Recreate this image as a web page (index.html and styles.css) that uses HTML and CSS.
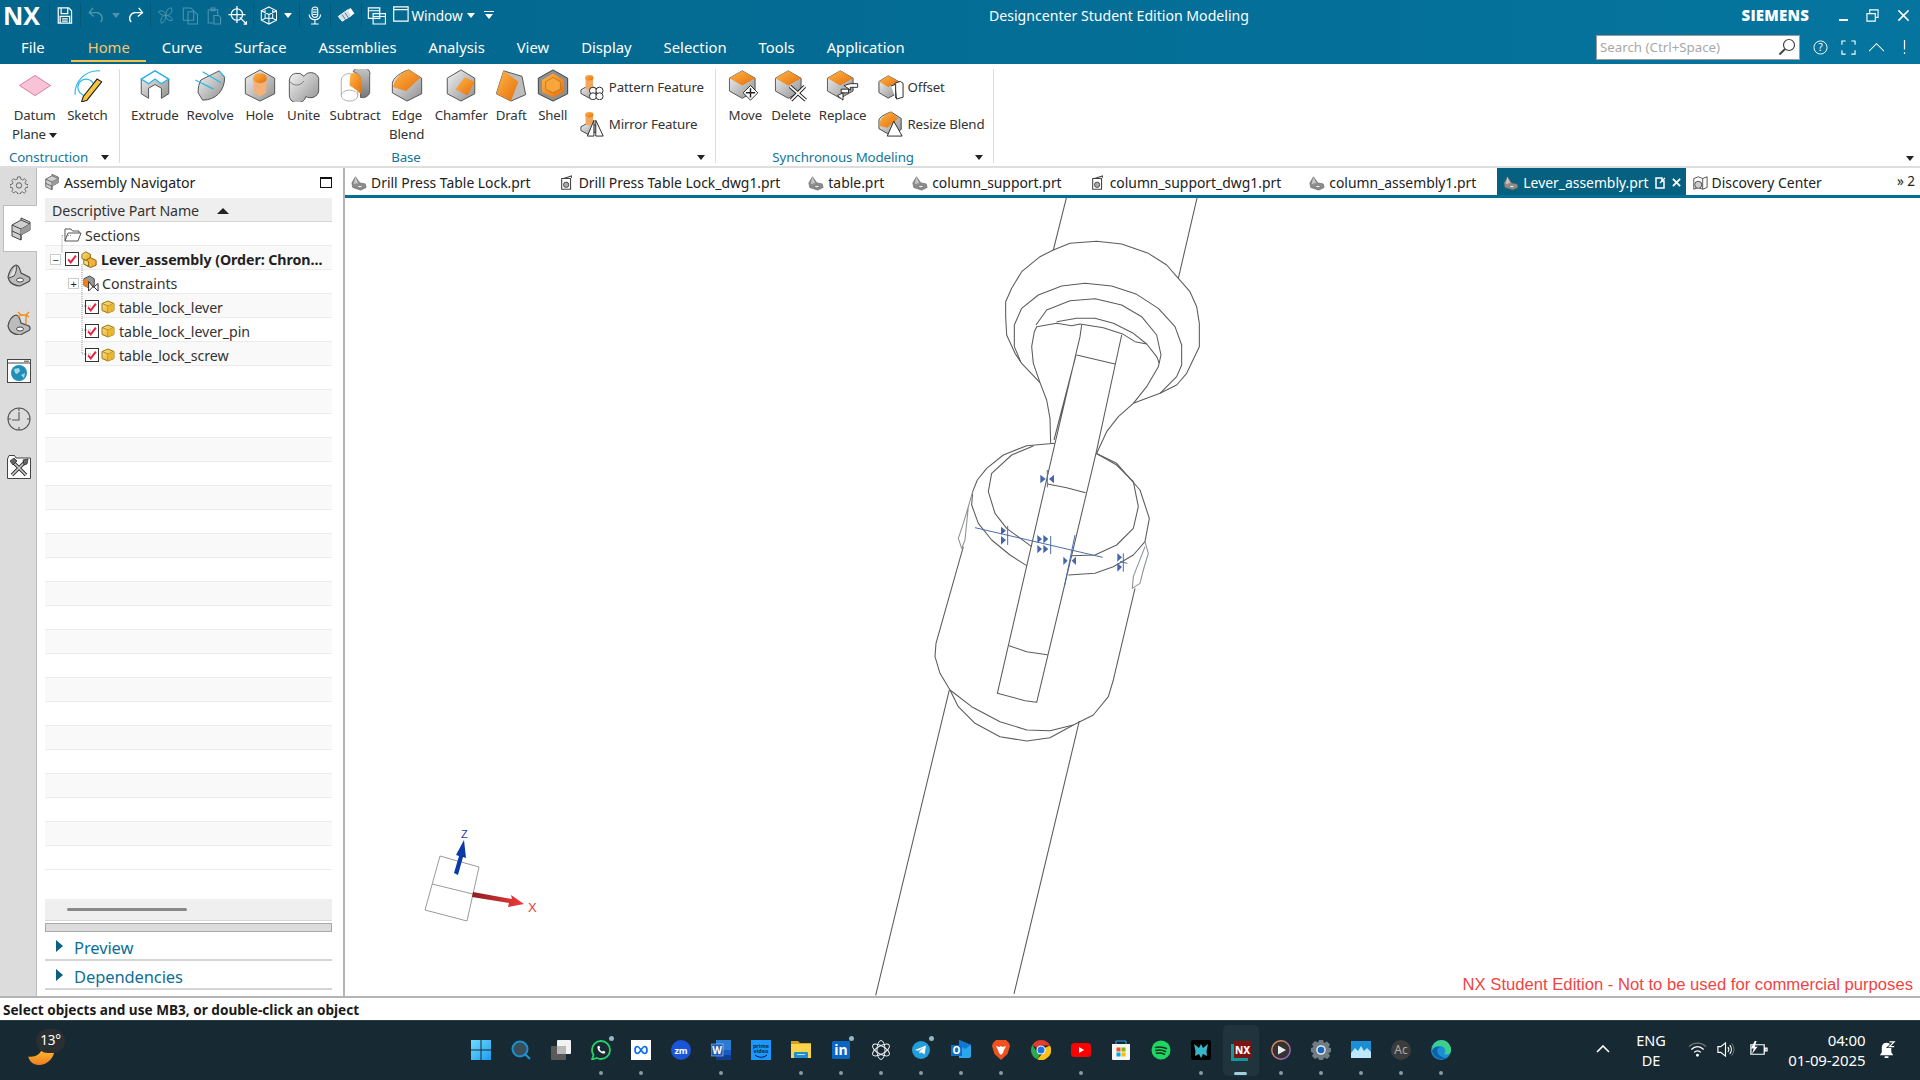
FILE: index.html
```html
<!DOCTYPE html>
<html lang="en">
<head>
<meta charset="UTF-8" />
<title>Designcenter Student Edition Modeling</title>
<link rel="stylesheet" href="styles.css">
</head>
<body>

<!-- shared icons -->
<svg class="defs" xmlns="http://www.w3.org/2000/svg">
  <defs>
    <linearGradient id="grey" x1="0" y1="0" x2="1" y2="1"><stop offset="0" stop-color="#f4f4f4"/><stop offset="1" stop-color="#8f8f8f"/></linearGradient>
    <linearGradient id="greyd" x1="0" y1="0" x2="0" y2="1"><stop offset="0" stop-color="#c9c9c9"/><stop offset="1" stop-color="#777"/></linearGradient>
    <linearGradient id="org" x1="0" y1="0" x2="1" y2="1"><stop offset="0" stop-color="#ffb54a"/><stop offset="1" stop-color="#e56f08"/></linearGradient>
    <linearGradient id="yel" x1="0" y1="0" x2="1" y2="1"><stop offset="0" stop-color="#ffe58a"/><stop offset="1" stop-color="#d9a21c"/></linearGradient>
    <linearGradient id="win" x1="0" y1="0" x2="1" y2="1"><stop offset="0" stop-color="#6fdcff"/><stop offset="1" stop-color="#1d9bf0"/></linearGradient>
    <linearGradient id="ring" x1="0" y1="0" x2="1" y2="1"><stop offset="0" stop-color="#f59a3c"/><stop offset="1" stop-color="#8a5ad0"/></linearGradient>
    <linearGradient id="redarrow" x1="0" y1="0" x2="1" y2="0"><stop offset="0" stop-color="#8e1e22"/><stop offset="1" stop-color="#f03a3a"/></linearGradient>
    <linearGradient id="moon" x1="0" y1="0" x2="0" y2="1"><stop offset="0" stop-color="#ffc23a"/><stop offset="1" stop-color="#ee7d1c"/></linearGradient>
  </defs>

  <!-- ribbon -->
  <symbol id="r-datum" viewBox="0 0 36 36"><path d="M1 18 18 7 35 18 18 29Z" fill="#f8c3d6" stroke="#df6f9c"/></symbol>
  <symbol id="r-sketch" viewBox="0 0 36 36"><path d="M5 28A25 25 0 0 1 32 2" fill="none" stroke="#29b6e6" stroke-width="1.2"/><circle cx="17" cy="20" r="9" fill="none" stroke="#29b6e6" stroke-width="1.2"/><path d="M29 11 34 14 18 34 12 36 14 30Z" fill="#f7c63c" stroke="#222" stroke-width="1.2"/></symbol>
  <symbol id="r-extrude" viewBox="0 0 36 36"><path d="M3 11 18 2 33 11V27L25 32V21L18 17 11 21V32L3 27Z" fill="url(#grey)" stroke="#4a4a4a"/><path d="M3 11 18 2 33 11 25 16 18 11 11 16Z" fill="#fff" stroke="#2cb5e6" stroke-width="1.4"/></symbol>
  <symbol id="r-revolve" viewBox="0 0 36 36"><path d="M8 12 28 2 34 9C34 24 24 34 10 34L5 26C5 20 6 16 8 12Z" fill="url(#grey)" stroke="#4a4a4a"/><path d="M2 12 22 22M10 3 30 15M28 2 34 9" fill="none" stroke="#2cb5e6" stroke-width="1.4"/></symbol>
  <symbol id="r-hole" viewBox="0 0 36 36"><path d="M18 1 34 10V27L18 35 2 27V10Z" fill="url(#grey)" stroke="#4a4a4a"/><path d="M11 10V26L18 30 25 26V10Z" fill="#f2b178"/><ellipse cx="18" cy="10" rx="7.5" ry="5.5" fill="url(#org)"/></symbol>
  <symbol id="r-unite" viewBox="0 0 36 36"><path d="M2 12A9 9 0 0 1 18 8 9 9 0 0 1 34 10V24A9 8 0 0 1 20 30 9 8 0 0 1 2 28Z" fill="url(#grey)" stroke="#4a4a4a"/><path d="M2 13C6 19 14 19 18 13" fill="none" stroke="#777"/></symbol>
  <symbol id="r-subtract" viewBox="0 0 36 36"><path d="M16 3A9 7 0 0 1 34 7V26A8 7 0 0 1 24 31V12C24 7 20 4 16 3Z" fill="url(#greyd)" stroke="#555"/><path d="M13 5C18 3 24 6 25 12V28C21 24 16 20 12 18Z" fill="url(#org)"/><ellipse cx="12" cy="29" rx="9" ry="6" fill="none" stroke="#aaa"/><path d="M3 29V12A9 8 0 0 1 13 5M21 29V23" fill="none" stroke="#aaa"/></symbol>
  <symbol id="r-blend" viewBox="0 0 36 36"><path d="M20 1 34 10V27L18 35 2 26V16C2 10 12 3 20 1Z" fill="url(#grey)" stroke="#4a4a4a"/><path d="M20 1 33 9 17 24 3 20C3 12 12 3 20 1Z" fill="url(#org)"/></symbol>
  <symbol id="r-chamfer" viewBox="0 0 36 36"><path d="M18 1 33 10V27L18 35 3 27V10Z" fill="url(#grey)" stroke="#4a4a4a"/><path d="M22 9 33 14 25 29 12 22Z" fill="url(#org)"/></symbol>
  <symbol id="r-draft" viewBox="0 0 36 36"><path d="M10 2 30 8 34 28 18 35 2 27Z" fill="#bdbdbd" stroke="#4a4a4a"/><path d="M10 2 18 35 2 27Z M10 2 26 14 18 35Z" fill="url(#org)"/></symbol>
  <symbol id="r-shell" viewBox="0 0 36 36"><path d="M18 1 34 10V27L18 35 2 27V10Z" fill="#8f8f8f" stroke="#333"/><path d="M18 5 30 12V25L18 31 6 25V12Z" fill="url(#org)"/><path d="M10 14 18 9 26 14V22L18 26 10 22Z" fill="#f7a63a" stroke="#a65b08" stroke-width=".6"/></symbol>
  <symbol id="r-pattern" viewBox="0 0 28 28"><path d="M1 17 10 12 20 17V21L10 26 1 21Z" fill="url(#grey)" stroke="#444"/><path d="M6 4V16L10 18 14 16V4Z" fill="#f0a860"/><ellipse cx="10" cy="4" rx="4.5" ry="3" fill="url(#org)"/><g fill="#fff" stroke="#222"><circle cx="14" cy="18" r="3.8"/><circle cx="21" cy="18" r="3.8"/><circle cx="14" cy="24" r="3.8"/><circle cx="21" cy="24" r="3.8"/></g></symbol>
  <symbol id="r-mirror" viewBox="0 0 28 28"><path d="M1 17 10 12 20 17V21L10 26 1 21Z" fill="url(#grey)" stroke="#444"/><path d="M6 4V14L10 16 14 14V4Z" fill="#f0a860"/><ellipse cx="10" cy="4" rx="4.5" ry="3" fill="url(#org)"/><path d="M15 10 8 27H15ZM17 10 25 27H17Z" fill="#fff" stroke="#222"/></symbol>
  <symbol id="r-cube" viewBox="0 0 36 36"><path d="M15 2 29 10V24L15 32 1 24V10Z" fill="url(#grey)" stroke="#4a4a4a"/><path d="M15 2 29 10 15 18 1 10Z" fill="url(#org)"/></symbol>
  <symbol id="r-offset" viewBox="0 0 28 28"><path d="M11 2 22 8V20L11 26 1 20V8Z" fill="url(#grey)" stroke="#444"/><path d="M11 2 22 8 11 14 1 8Z" fill="url(#org)"/><path d="M18 10 24 8 27 10V25L20 27Z" fill="#fff" stroke="#222"/><path d="M14 13 19 11V26" fill="#fff" stroke="#222"/></symbol>
  <symbol id="r-resize" viewBox="0 0 28 28"><path d="M14 1 25 8V20L13 26 1 19V10C1 7 8 3 14 1Z" fill="url(#grey)" stroke="#444"/><path d="M14 1 22 8 10 18 1 16C1 9 8 3 14 1Z" fill="url(#org)"/><path d="M17 11 26 27H10Z" fill="#fff" stroke="#222"/></symbol>

  <!-- file tabs -->
  <symbol id="f-part" viewBox="0 0 18 18"><path d="M5 2 10 9 16 10 17 14 11 17 2 14 1 9Z" fill="#8e8e8e" stroke="#5a5a5a" stroke-width=".7"/><path d="M5 2 8 9 3 10Z" fill="#c8c8c8"/><ellipse cx="10" cy="13" rx="2.6" ry="1.4" fill="#eee" stroke="#555" stroke-width=".7"/></symbol>
  <symbol id="f-dwg" viewBox="0 0 18 18"><path d="M3 4H13V16H3Z" fill="#fff" stroke="#444" stroke-width="1.2"/><path d="M5 4 14 1V3" fill="none" stroke="#444" stroke-width="1.2"/><circle cx="8" cy="11" r="3" fill="#aaa" stroke="#444"/></symbol>
  <symbol id="f-disc" viewBox="0 0 18 18"><path d="M2 4 7 2 12 4 17 2V14L12 16 7 14 2 16Z" fill="#fff" stroke="#444"/><path d="M12 4V16" stroke="#444"/><circle cx="7" cy="11" r="4" fill="#ccc" stroke="#444"/></symbol>

  <!-- quick access -->
  <symbol id="q-save" viewBox="0 0 20 20"><path d="M3 2H14L17 5V18H3ZM6 2V8H13V2M5 11H15V18H5ZM7 13.5H13M7 16H13" fill="none" stroke="currentColor" stroke-width="1.3"/></symbol>
  <symbol id="q-undo" viewBox="0 0 20 20"><path d="M7 2 3 7 8 11M3 7H11A6 6 0 0 1 15 17" fill="none" stroke="currentColor" stroke-width="1.4"/></symbol>
  <symbol id="q-redo" viewBox="0 0 20 20"><path d="M13 2 17 7 12 11M17 7H9A6 6 0 0 0 5 17" fill="none" stroke="currentColor" stroke-width="1.4"/></symbol>
  <symbol id="q-cut" viewBox="0 0 20 20"><path d="M10 10C10 5 12 2 16 2 17 6 15 10 10 10ZM10 10C6 10 3 8 2 6 6 4 10 6 10 10ZM10 10C14 10 17 13 17 15 13 16 10 14 10 10ZM10 10C10 14 8 18 5 18 4 14 6 10 10 10Z" fill="none" stroke="currentColor"/></symbol>
  <symbol id="q-copy" viewBox="0 0 20 20"><path d="M3 2H11L14 5V15H3ZM8 6H15L18 9V19H8Z" fill="none" stroke="currentColor" stroke-width="1.1"/></symbol>
  <symbol id="q-paste" viewBox="0 0 20 20"><path d="M4 4H14V9M4 4V18H9M7 2H11V5H7ZM10 10H15L17 12V19H10Z" fill="none" stroke="currentColor" stroke-width="1.1"/></symbol>
  <symbol id="q-cross" viewBox="0 0 20 20"><circle cx="9" cy="9" r="6" fill="none" stroke="currentColor" stroke-width="1.3"/><path d="M9 0V18M0 9H18M12 12 19 19M16 19H19V16" fill="none" stroke="currentColor" stroke-width="1.3"/></symbol>
  <symbol id="q-wire" viewBox="0 0 20 20"><path d="M10 1 18 5V15L10 19 2 15V5ZM2 5 10 9 18 5M10 9V19M6 3V13L2 15M14 3V13L18 15M6 13H14" fill="none" stroke="currentColor" stroke-width="1.1"/></symbol>
  <symbol id="q-mic" viewBox="0 0 20 20"><rect x="7" y="1" width="6" height="11" rx="3" fill="none" stroke="currentColor" stroke-width="1.2"/><path d="M8 4H12M8 6.5H12M8 9H12M4 9A6 5.5 0 0 0 16 9M10 15V19M6 19H14" fill="none" stroke="currentColor" stroke-width="1.2"/></symbol>
  <symbol id="q-paint" viewBox="0 0 20 20"><path d="M2 11 12 4 16 10 6 16Z" fill="#cfe2ea" stroke="#fff"/><path d="M12 4 15 2 19 8 16 10" fill="#fff"/><path d="M6 9 10 15M9 7 13 13" stroke="#557" stroke-width=".8"/></symbol>
  <symbol id="q-wins" viewBox="0 0 20 20"><path d="M1 2H13V13H1ZM1 5H13M6 8H19V19H6ZM6 11H19" fill="#05709a" stroke="currentColor" stroke-width="1.2"/></symbol>
  <symbol id="q-win" viewBox="0 0 20 20"><path d="M1 1H19V19H1ZM1 4.5H19" fill="none" stroke="currentColor" stroke-width="1.5"/></symbol>

  <!-- left rail -->
  <symbol id="n-gear" viewBox="0 0 20 20"><path d="M8.5 1H11.5L12 3.5 14 4.4 16.2 3 18.2 5.3 16.7 7.3 17.3 9 20 9.5V12.5L17.4 13 16.6 15 18 17 15.8 19 13.8 17.6 12 18.3 11.5 20H8.5L8 18.2 6 17.4 4 18.9 1.9 16.8 3.2 14.8 2.5 13 0 12.5V9.5L2.5 9 3.3 7.1 1.9 5.1 4 3 6 4.3 8 3.5Z" fill="none" stroke="#555" stroke-width=".9"/><circle cx="10" cy="10.5" r="3" fill="none" stroke="#555"/></symbol>
  <symbol id="n-asm" viewBox="0 0 20 24"><path d="M1 8 10 3V1L19 5V13L10 18V23L1 19Z" fill="#cfcfcf" stroke="#444"/><path d="M1 8 10 12V23M10 3 19 7M10 12 19 7M1 14 10 18" fill="none" stroke="#444"/><path d="M10 12 19 7V13L10 18Z" fill="#9a9a9a"/></symbol>
  <symbol id="n-part" viewBox="0 0 24 22"><path d="M9 1C12 1 13 5 14 9L22 13C24 15 23 17 21 18L13 22C8 22 3 19 2 16L1 13C2 8 5 2 9 1Z" fill="#bcbcbc" stroke="#4a4a4a" stroke-width="1.2"/><path d="M9 1C10 5 9 9 7 12L2 14" fill="#e2e2e2" stroke="#4a4a4a"/><ellipse cx="13" cy="16" rx="3.5" ry="2" fill="#fff" stroke="#444"/></symbol>
  <symbol id="n-part2" viewBox="0 0 24 24"><path d="M9 4C12 4 13 8 14 12L22 15C24 17 23 19 21 20L13 24C8 24 3 21 2 18L1 15C2 10 5 5 9 4Z" fill="#bcbcbc" stroke="#4a4a4a" stroke-width="1.2"/><ellipse cx="13" cy="18" rx="3.5" ry="2" fill="#fff" stroke="#444"/><path d="M11 1 14 4 11 6M14 4H19M22 1 19 4 22 6M19 4V13" fill="none" stroke="#ef8a1b" stroke-width="1.3"/></symbol>
  <symbol id="n-web" viewBox="0 0 24 24"><rect x=".5" y=".5" width="23" height="23" fill="#fff" stroke="#444"/><path d="M1 4H23M17 2.2H22" stroke="#444"/><circle cx="12" cy="14" r="8" fill="#1f8fb8"/><path d="M7 10 12 9 13 12 10 15 8 14ZM14 16 18 14 17 19Z" fill="#a5d7e6"/></symbol>
  <symbol id="n-clock" viewBox="0 0 24 24"><circle cx="12" cy="12" r="11" fill="none" stroke="#555" stroke-width="1.1"/><path d="M12 1V4M12 20V23M1 12H4M20 12H23M12 5V13H5" fill="none" stroke="#555" stroke-width="1.1"/></symbol>
  <symbol id="n-tools" viewBox="0 0 24 24"><path d="M.5 4V23.5H23.5V3H9L7.5 .5H2Z" fill="#fff" stroke="#444"/><path d="M5 20 18 7M6 7 19 20" stroke="#333" stroke-width="3.6"/><path d="M5 20 18 7M6 7 19 20" stroke="#c9c9c9" stroke-width="1.6"/><path d="M16 5 21 4 20 9 17 10ZM3 6 7 3 10 6 6 10Z" fill="#666" stroke="#222" stroke-width=".7"/></symbol>

  <!-- tree -->
  <symbol id="t-folder" viewBox="0 0 18 14"><path d="M1 13V1H7L8.5 3H15V5M1 13 4 5H17L14 13Z" fill="#fff" stroke="#555"/></symbol>
  <symbol id="t-asm" viewBox="0 0 18 18"><path d="M5 1 10 3.5V8L5 10.5 1 8V3.5Z" fill="url(#yel)" stroke="#8a6a14"/><path d="M10 7 16 10V15L10 17.5 5 15V10Z" fill="#f1b13a" stroke="#8a5a10"/><path d="M3 9 8 11V16L3 14Z" fill="#f7dc7c" stroke="#8a6a14"/></symbol>
  <symbol id="t-con" viewBox="0 0 18 18"><path d="M2 4 8 1 13 4V11L8 14 2 11Z" fill="#999" stroke="#444"/><path d="M2 4 8 7V14L2 11Z" fill="#ef7f1a"/><path d="M7 7V17L12 12 17 17V9L12 13Z" fill="#fff" stroke="#222"/></symbol>
  <symbol id="t-cube" viewBox="0 0 14 14"><path d="M7 1 13 3.5V10.5L7 13 1 10.5V3.5Z" fill="url(#yel)" stroke="#9a7a18"/><path d="M1 3.5 7 6 13 3.5M7 6V13" fill="none" stroke="#9a7a18" stroke-width=".8"/><path d="M7 6 13 3.5V10.5L7 13Z" fill="#eab52e"/></symbol>
  <symbol id="t-check" viewBox="0 0 14 14"><path d="M2.5 7.5 5.5 11 11.5 3" fill="none" stroke="#ee1f3c" stroke-width="2.3"/></symbol>

  <!-- taskbar -->
  <symbol id="b-start" viewBox="0 0 20 20"><path d="M0 0H9.5V9.5H0ZM10.5 0H20V9.5H10.5ZM0 10.5H9.5V20H0ZM10.5 10.5H20V20H10.5Z" fill="url(#win)"/></symbol>
  <symbol id="b-search" viewBox="0 0 20 20"><circle cx="9" cy="9" r="7.5" fill="#3b4d56" stroke="#1c8fd2" stroke-width="2"/><path d="M14 14 19 19" stroke="#1c8fd2" stroke-width="2.2"/></symbol>
  <symbol id="b-view" viewBox="0 0 20 20"><rect y="6" width="15" height="14" rx="1" fill="#5a5a5a"/><rect x="6" width="14" height="14" rx="1" fill="#f2f2f2"/><rect x="6" y="6" width="9" height="8" fill="#b9b9b9"/></symbol>
  <symbol id="b-wa" viewBox="0 0 20 20"><path d="M10 1A9 9 0 0 1 10 19C8.5 19 7 18.6 5.8 18L1 19.5 2.5 15C1.5 13.6 1 11.8 1 10A9 9 0 0 1 10 1Z" fill="none" stroke="#25d366" stroke-width="1.8"/><path d="M6.8 6C6 7.5 6.5 9.5 8.3 11.5 10.2 13.3 12.5 14 14 13.2L14.3 11.8 12.3 10.7 11.3 11.6C10 11 9 10 8.4 8.7L9.2 7.7 8.2 5.8Z" fill="#fff"/></symbol>
  <symbol id="b-meta" viewBox="0 0 20 20"><rect width="20" height="20" fill="#fff"/><path d="M4 10C4 8 5 6.5 6.5 6.5 8.5 6.5 11.5 13.5 13.5 13.5 15 13.5 16 12 16 10 16 8 15 6.5 13.5 6.5 11.5 6.5 8.5 13.5 6.5 13.5 5 13.5 4 12 4 10Z" fill="none" stroke="#0a6cf0" stroke-width="1.7"/></symbol>
  <symbol id="b-zm" viewBox="0 0 20 20"><circle cx="10" cy="10" r="10" fill="#1a55d8"/></symbol>
  <symbol id="b-word" viewBox="0 0 20 20"><path d="M5 0H20V5H5ZM5 5H20V10H5Z" fill="#2b7cd3"/><path d="M5 10H20V15H5Z" fill="#185abd"/><path d="M5 15H20V20H5Z" fill="#103f91"/><rect y="4" width="12" height="12" fill="#1a5dbb" stroke="#fff" stroke-width=".4"/></symbol>
  <symbol id="b-prime" viewBox="0 0 20 20"><rect width="20" height="20" fill="#1a98ff"/><path d="M4 15C8 18 12 18 16 15" fill="none" stroke="#113" stroke-width="1"/></symbol>
  <symbol id="b-files" viewBox="0 0 20 20"><path d="M0 1H7L9 3H20V18H0Z" fill="#d9a01f"/><path d="M0 4H20V18H0Z" fill="#fbd34d"/><rect x="3" y="12" width="14" height="6" rx="1" fill="#1d8ecf"/><rect x="6" y="14" width="8" height="1" fill="#bfe3f5"/></symbol>
  <symbol id="b-in" viewBox="0 0 20 20"><rect width="18" height="18" x="1" y="1" rx="1.5" fill="#0a66c2"/></symbol>
  <symbol id="b-gpt" viewBox="0 0 20 20"><g fill="none" stroke="#eee" stroke-width="1"><ellipse cx="10" cy="10" rx="4" ry="9.5"/><ellipse cx="10" cy="10" rx="4" ry="9.5" transform="rotate(60 10 10)"/><ellipse cx="10" cy="10" rx="4" ry="9.5" transform="rotate(120 10 10)"/></g></symbol>
  <symbol id="b-tg" viewBox="0 0 20 20"><circle cx="10" cy="10" r="9" fill="#229ed9"/><path d="M4 10 15 5.5 13.5 14.5 10.3 12.2 8.7 13.8 8.3 11.2 13 7.2 7.2 10.8Z" fill="#fff"/></symbol>
  <symbol id="b-out" viewBox="0 0 20 20"><path d="M8 0 20 5V17L18 18H8Z" fill="#28a8ea"/><path d="M8 0 20 5 14 9 8 5Z" fill="#0f78d4"/><rect y="5" width="11" height="11" fill="#0f6cc9"/></symbol>
  <symbol id="b-brave" viewBox="0 0 20 20"><path d="M5 0H15L18 3 19 6 16.5 14 10 20 3.5 14 1 6 2 3Z" fill="#f0511f"/><path d="M5 6 8.5 7 10 6 11.5 7 15 6 13 10 12 13 10 15 8 13 7 10Z" fill="#fff"/></symbol>
  <symbol id="b-chrome" viewBox="0 0 20 20"><path d="M10 0A10 10 0 0 1 19 5.5H10A4.5 4.5 0 0 0 5.8 8L1.5 4.8A10 10 0 0 1 10 0Z" fill="#e33b2e"/><path d="M1.5 4.8 6 12.5A5 5 0 0 0 9 14.4L6.3 19.3A10 10 0 0 1 1.5 4.8Z" fill="#2da94f"/><path d="M19 5.5A10 10 0 0 1 6.3 19.3L10.5 14.5A4.5 4.5 0 0 0 13.5 8Z" fill="#fbc116"/><circle cx="10" cy="10" r="4.6" fill="#fff"/><circle cx="10" cy="10" r="3.5" fill="#1a73e8"/></symbol>
  <symbol id="b-yt" viewBox="0 0 20 20"><rect y="3" width="20" height="14" rx="3.5" fill="#f00"/><path d="M8 7 13 10 8 13Z" fill="#fff"/></symbol>
  <symbol id="b-store" viewBox="0 0 20 20"><path d="M1 4H19V19Q19 20 18 20H2Q1 20 1 19Z" fill="#f5f5f5"/><path d="M5 4V1H15V4" fill="none" stroke="#35a0dd"/><path d="M5.5 7.5H9.5V11.5H5.5Z" fill="#f25022"/><path d="M10.5 7.5H14.5V11.5H10.5Z" fill="#7fba00"/><path d="M5.5 12.5H9.5V16.5H5.5Z" fill="#00a4ef"/><path d="M10.5 12.5H14.5V16.5H10.5Z" fill="#ffb900"/></symbol>
  <symbol id="b-spot" viewBox="0 0 20 20"><circle cx="10" cy="10" r="9.5" fill="#1ed760"/><path d="M4.5 7.5C8 6.5 12 6.8 15.5 8.5M5 10.5C8 9.7 11.5 10 14.5 11.5M5.5 13.3C8 12.7 11 13 13.5 14.2" fill="none" stroke="#14301f" stroke-width="1.5" stroke-linecap="round"/></symbol>
  <symbol id="b-dark" viewBox="0 0 20 20"><rect width="20" height="20" rx="2.5" fill="#000"/><path d="M3 4 8 8 10 4 12 8 17 4 15.5 11 16 16 12 14 10 18 8 14 4 16 4.5 11Z" fill="#36b6c9"/></symbol>
  <symbol id="b-nx" viewBox="0 0 20 20"><path d="M0 3H17V20H0Z" fill="#0e9aa0"/><path d="M3 0H20V17H3Z" fill="#7d1414"/></symbol>
  <symbol id="b-play" viewBox="0 0 20 20"><circle cx="10" cy="10" r="9.2" fill="#333" stroke="url(#ring)" stroke-width="1.4"/><path d="M7 5.5 15 10 7 14.5Z" fill="#eee"/></symbol>
  <symbol id="b-set" viewBox="0 0 20 20"><path d="M8 0H12L13 3 16 1.5 19 4.5 17.5 7.5 20 8V12L17.5 13 19 16 16 19 13 17.5 12 20H8L7 17.5 4 19 1 16 2.5 13 0 12V8L2.5 7 1 4 4 1 7 2.5Z" fill="#717c84"/><circle cx="10" cy="10" r="4.8" fill="#e6e6e6"/><circle cx="10" cy="10" r="3.3" fill="#1566c0"/></symbol>
  <symbol id="b-photo" viewBox="0 0 20 20"><rect y="1" width="20" height="17" fill="#1a8fd6"/><path d="M0 13 4 8 7 11 10 6 13 11 16 8 20 12V18H0Z" fill="#bfe7fb"/></symbol>
  <symbol id="b-ac" viewBox="0 0 20 20"><circle cx="10" cy="10" r="10" fill="#3c3c3c"/></symbol>
  <symbol id="b-edge" viewBox="0 0 20 20"><circle cx="10" cy="10" r="10" fill="#1a8fd6"/><path d="M10 0A10 10 0 0 1 20 11C20 14 16 15 13 14 16 12 14 6 9 6 5 6 2 8 1 11A10 10 0 0 1 10 0Z" fill="#3ed08a"/><path d="M1 11C2 7 6 6 9 7 6 8 5 12 8 15 10 17 13 18 15 18A10 10 0 0 1 1 11Z" fill="#0d5fa8"/></symbol>
</svg>

<div class="app">

  <header class="titlebar">
    <div class="top-row">
      <div class="qat">
        <span class="nx-logo">NX</span>
        <i class="qsep"></i>
        <svg class="qi"><use href="#q-save"/></svg>
        <i class="qsep"></i>
        <svg class="qi dim"><use href="#q-undo"/></svg>
        <span class="qarrow dim"></span>
        <svg class="qi"><use href="#q-redo"/></svg>
        <i class="qsep"></i>
        <svg class="qi dim"><use href="#q-cut"/></svg>
        <svg class="qi dim"><use href="#q-copy"/></svg>
        <svg class="qi dim"><use href="#q-paste"/></svg>
        <svg class="qi"><use href="#q-cross"/></svg>
        <i class="qsep"></i>
        <svg class="qi"><use href="#q-wire"/></svg>
        <span class="qarrow"></span>
        <i class="qsep"></i>
        <svg class="qi"><use href="#q-mic"/></svg>
        <i class="qsep"></i>
        <svg class="qi"><use href="#q-paint"/></svg>
        <i class="qsep"></i>
        <svg class="qi"><use href="#q-wins"/></svg>
        <svg class="qi q-one"><use href="#q-win"/></svg>
        <span class="q-window">Window</span>
        <span class="qarrow"></span>
        <span class="qcustom"></span>
      </div>
      <div class="app-title">Designcenter Student Edition Modeling</div>
      <div class="siemens">SIEMENS</div>
      <div class="winbtns">
        <span class="w-min"></span>
        <svg class="w-ic" viewBox="0 0 14 14"><path d="M1 5H10V13H1ZM4 5V1H13V9H10" fill="none" stroke="#fff" stroke-width="1.2"/></svg>
        <svg class="w-ic" viewBox="0 0 14 14"><path d="M1.5 1.5 12.5 12.5M12.5 1.5 1.5 12.5" stroke="#fff" stroke-width="1.6"/></svg>
      </div>
    </div>
    <div class="menu-row">
      <nav class="menu">
        <a>File</a><a class="active">Home</a><a>Curve</a><a>Surface</a><a>Assemblies</a><a>Analysis</a><a>View</a><a>Display</a><a>Selection</a><a>Tools</a><a>Application</a>
      </nav>
      <div class="menu-right">
        <div class="search">
          <span>Search (Ctrl+Space)</span>
          <svg class="search-ic" viewBox="0 0 18 18"><circle cx="11" cy="7" r="5.5" fill="#fff" stroke="#444" stroke-width="1.2"/><path d="M7 11 1.5 16.5" stroke="#444" stroke-width="2"/></svg>
        </div>
        <svg class="mr-ic" viewBox="0 0 16 16"><circle cx="8" cy="8" r="7" fill="none" stroke="#fff"/><text x="8" y="11.5" text-anchor="middle" class="tx-help">?</text></svg>
        <svg class="mr-ic" viewBox="0 0 16 16"><path d="M1 5V1H5M11 1H15V5M15 11V15H11M5 15H1V11" fill="none" stroke="#fff" stroke-width="1.2"/></svg>
        <svg class="mr-ic" viewBox="0 0 16 16"><path d="M0 12 8 4 16 12" fill="none" stroke="#fff" stroke-width="1.1"/></svg>
        <svg class="mr-ic" viewBox="0 0 16 16"><path d="M8 0V10M8 13V15" stroke="#fff" stroke-width="1.3"/></svg>
      </div>
    </div>
  </header>

  <section class="ribbon">
    <div class="group g-cons">
      <div class="group-tools">
        <div class="tool"><svg class="big-ic"><use href="#r-datum"/></svg><span>Datum<br>Plane <b class="caret"></b></span></div>
        <div class="tool"><svg class="big-ic"><use href="#r-sketch"/></svg><span>Sketch</span></div>
      </div>
      <div class="group-label"><span>Construction</span><b class="caret"></b></div>
    </div>
    <div class="group g-base">
      <div class="group-tools">
        <div class="tool"><svg class="big-ic"><use href="#r-extrude"/></svg><span>Extrude</span></div>
        <div class="tool"><svg class="big-ic"><use href="#r-revolve"/></svg><span>Revolve</span></div>
        <div class="tool"><svg class="big-ic"><use href="#r-hole"/></svg><span>Hole</span></div>
        <div class="tool"><svg class="big-ic"><use href="#r-unite"/></svg><span>Unite</span></div>
        <div class="tool"><svg class="big-ic"><use href="#r-subtract"/></svg><span>Subtract</span></div>
        <div class="tool"><svg class="big-ic"><use href="#r-blend"/></svg><span>Edge<br>Blend</span></div>
        <div class="tool nudge"><svg class="big-ic"><use href="#r-chamfer"/></svg><span>Chamfer</span></div>
        <div class="tool tight"><svg class="big-ic"><use href="#r-draft"/></svg><span>Draft</span></div>
        <div class="tool tight"><svg class="big-ic"><use href="#r-shell"/></svg><span>Shell</span></div>
        <div class="small-tools">
          <div class="stool"><svg class="small-ic"><use href="#r-pattern"/></svg><span>Pattern Feature</span></div>
          <div class="stool"><svg class="small-ic"><use href="#r-mirror"/></svg><span>Mirror Feature</span></div>
        </div>
      </div>
      <div class="group-label"><span>Base</span><b class="caret"></b></div>
    </div>
    <div class="group g-sync">
      <div class="group-tools">
        <div class="tool"><svg class="big-ic" viewBox="0 0 36 36"><use href="#r-cube"/><path d="M24 18 32 26 24 34 16 26Z" fill="#fff" stroke="#222"/><path d="M24 21V31M19 26H29" stroke="#222" stroke-width="1.6"/></svg><span>Move</span></div>
        <div class="tool"><svg class="big-ic" viewBox="0 0 36 36"><use href="#r-cube"/><path d="M17 19 34 34M33 19 18 34" stroke="#222" stroke-width="4"/><path d="M17 19 34 34M33 19 18 34" stroke="#fff" stroke-width="2"/></svg><span>Delete</span></div>
        <div class="tool"><svg class="big-ic" viewBox="0 0 36 36"><use href="#r-cube"/><path d="M26 16H34V20H26V23L19 18ZM24 26H16V22H24ZM18 26V34L12 29Z" fill="#fff" stroke="#222"/></svg><span>Replace</span></div>
        <div class="small-tools sync-small">
          <div class="stool"><svg class="small-ic"><use href="#r-offset"/></svg><span>Offset</span></div>
          <div class="stool"><svg class="small-ic"><use href="#r-resize"/></svg><span>Resize Blend</span></div>
        </div>
      </div>
      <div class="group-label"><span>Synchronous Modeling</span><b class="caret"></b></div>
    </div>
    <div class="ribbon-end"><b class="caret"></b></div>
  </section>

  <div class="workspace">

    <aside class="rail">
      <div class="rail-btn"><svg class="rail-ic gear"><use href="#n-gear"/></svg></div>
      <div class="rail-btn on"><svg class="rail-ic"><use href="#n-asm"/></svg></div>
      <div class="rail-btn"><svg class="rail-ic"><use href="#n-part"/></svg></div>
      <div class="rail-btn"><svg class="rail-ic"><use href="#n-part2"/></svg></div>
      <div class="rail-btn"><svg class="rail-ic"><use href="#n-web"/></svg></div>
      <div class="rail-btn"><svg class="rail-ic"><use href="#n-clock"/></svg></div>
      <div class="rail-btn"><svg class="rail-ic"><use href="#n-tools"/></svg></div>
    </aside>

    <aside class="navigator">
      <div class="nav-head">
        <svg class="nav-head-ic"><use href="#n-asm"/></svg>
        <span>Assembly Navigator</span>
        <i class="nav-max"></i>
      </div>
      <div class="tree">
        <div class="tree-head"><span>Descriptive Part Name</span><b class="sort-up"></b></div>
        <div class="tree-rows">
          <svg class="tree-lines" viewBox="0 0 288 150">
            <path d="M9 13.5H18M9 13.5V31M29 42V132H39M29 84H39M29 108H39" fill="none" stroke="#999" stroke-dasharray="1 1"/>
          </svg>
          <div class="row l1"><svg class="row-folder"><use href="#t-folder"/></svg><span>Sections</span></div>
          <div class="row l1 alt"><i class="expander">&minus;</i><i class="chk"><svg><use href="#t-check"/></svg></i><svg class="row-ic"><use href="#t-asm"/></svg><strong>Lever_assembly (Order: Chron...</strong></div>
          <div class="row l2"><i class="expander">+</i><svg class="row-ic con"><use href="#t-con"/></svg><span>Constraints</span></div>
          <div class="row l3 alt"><i class="chk"><svg><use href="#t-check"/></svg></i><svg class="row-cube"><use href="#t-cube"/></svg><span>table_lock_lever</span></div>
          <div class="row l3"><i class="chk"><svg><use href="#t-check"/></svg></i><svg class="row-cube"><use href="#t-cube"/></svg><span>table_lock_lever_pin</span></div>
          <div class="row l3 alt"><i class="chk"><svg><use href="#t-check"/></svg></i><svg class="row-cube"><use href="#t-cube"/></svg><span>table_lock_screw</span></div>
          <div class="row"></div><div class="row alt"></div><div class="row"></div><div class="row alt"></div><div class="row"></div><div class="row alt"></div>
          <div class="row"></div><div class="row alt"></div><div class="row"></div><div class="row alt"></div><div class="row"></div><div class="row alt"></div>
          <div class="row"></div><div class="row alt"></div><div class="row"></div><div class="row alt"></div><div class="row"></div><div class="row alt"></div>
          <div class="row"></div><div class="row alt"></div><div class="row"></div>
        </div>
        <div class="tree-scroll"><i></i></div>
      </div>
      <div class="splitter"></div>
      <div class="panel"><b class="panel-arrow"></b><span>Preview</span></div>
      <div class="panel"><b class="panel-arrow"></b><span>Dependencies</span></div>
    </aside>

    <main class="graphics">
      <div class="tabs">
        <div class="tab"><svg class="tab-ic"><use href="#f-part"/></svg>Drill Press Table Lock.prt</div>
        <div class="tab"><svg class="tab-ic"><use href="#f-dwg"/></svg>Drill Press Table Lock_dwg1.prt</div>
        <div class="tab"><svg class="tab-ic"><use href="#f-part"/></svg>table.prt</div>
        <div class="tab"><svg class="tab-ic"><use href="#f-part"/></svg>column_support.prt</div>
        <div class="tab"><svg class="tab-ic"><use href="#f-dwg"/></svg>column_support_dwg1.prt</div>
        <div class="tab"><svg class="tab-ic"><use href="#f-part"/></svg>column_assembly1.prt</div>
        <div class="tab active"><svg class="tab-ic"><use href="#f-part"/></svg>Lever_assembly.prt
          <svg class="tab-doc" viewBox="0 0 12 12"><path d="M2 1H8V4H10V11H2Z" fill="none" stroke="#fff" stroke-width="1.5"/><path d="M6 6 11 1" stroke="#fff" stroke-width="1.2"/></svg>
          <svg class="tab-close" viewBox="0 0 10 10"><path d="M1 1 9 9M9 1 1 9" stroke="#fff" stroke-width="2"/></svg>
        </div>
        <div class="tab"><svg class="tab-ic"><use href="#f-disc"/></svg>Discovery Center</div>
        <div class="tab-more">&raquo; 2</div>
      </div>

      <div class="canvas">
        <svg class="model" viewBox="345 198 1575 798">
          <!-- upper half of the part -->
          <g transform="translate(900 200) scale(.33333)" class="wire">
            <path d="M500-10 460 150M892-10 835 235"/>
            <path d="M420 548 365 490 345 460 320 405 317 350 317 305 335 265 365 215 420 170 460 150 510 130 590 124 665 132 745 160 800 195 835 235 870 275 890 320 898 370 898 440 860 520 830 555 780 580 700 610"/>
            <path d="M362 485 343 440 343 375 365 325 415 285 485 258 555 250 635 258 710 283 775 325 825 380 845 435 845 495 830 530 780 580"/>
            <path d="M408 375 440 330 510 302 585 296 665 315 725 350 770 405 783 465 775 500 740 560 700 610 655 650 620 695 590 760"/>
            <path d="M470 365 530 355 585 355 640 370 700 400 740 432 770 470 778 490"/>
            <path d="M452 730 450 655 440 600 420 548 400 490 395 440 403 395 410 380 470 370 515 377 540 372 610 383 670 403 705 425 740 432"/>
            <path d="M545 375 540 410 465 730M528 465 462 720M665 405 588 760M530 465 645 492"/>
          </g>
          <!-- lower half -->
          <g transform="translate(900 440) scale(.33333)" class="wire">
            <path d="M465 10 292 760 375 782 410 787 588 40M327 617 380 635 442 644M443 132 500 143 557 158"/>
            <path d="M465 10 380 17 310 45 260 85 232 120 218 155 215 195 235 250 275 300 330 345 380 377"/>
            <path d="M400 18 335 45 275 100 265 155 285 220 320 265 395 320"/>
            <path d="M588 40 650 75 700 125 715 200 700 265 650 315 585 345 515 347"/>
            <path d="M588 40 650 70 720 150 748 235 735 305 700 345 640 380 585 400 505 405"/>
            <path d="M190 320 108 610 105 650 120 700 150 750 215 800 300 845 380 870 450 872 520 855 580 825 625 770 640 720 705 445"/>
            <path class="thin" d="M218 155 205 200 190 250 175 295 185 325 195 300 205 200"/>
            <path class="thin" d="M735 305 745 340 730 390 720 430 697 445 700 410 735 320"/>
            <path d="M150 750 175 800 225 850 300 890 380 903 450 893 520 855"/>
            <path d="M148 750-73 1666M538 843 342 1662"/>
          </g>
          <!-- constraint markers -->
          <g transform="translate(900 440) scale(.33333)">
            <path class="con-line" d="M225 263 608 352M442 90V142M323 258V315M452 288V342M525 285 493 440M670 340V395M660 365 682 370"/>
            <path class="con-mark" d="M421 104 437 117 421 130ZM462 104 447 117 462 130ZM303 260 318 272 303 284ZM303 288 318 300 303 314ZM412 285 426 297 412 310ZM430 285 445 297 430 310ZM412 315 426 327 412 340ZM430 315 445 327 430 340ZM490 350 503 362 490 375ZM528 350 515 362 528 375ZM652 340 666 352 652 365ZM652 369 666 381 652 395Z"/>
          </g>
          <!-- triad -->
          <path class="triad-box" d="M440 856 479 867 467 921 425 910ZM432 884 473 894"/>
          <path d="M454 873 459 856 456 855 464 840 466 858 463 857 458 875Z" fill="#0b3aa8"/>
          <path d="M473 892 512 899 511 895 524 904 508 907 509 903 472 897Z" fill="url(#redarrow)"/>
          <text x="461" y="838" class="tx-z">Z</text>
          <text x="528" y="912" class="tx-x">X</text>
        </svg>
        <div class="student-note">NX Student Edition - Not to be used for commercial purposes</div>
      </div>
    </main>
  </div>

  <div class="statusbar">Select objects and use MB3, or double-click an object</div>

  <footer class="taskbar">
    <div class="weather">
      <svg class="moon" viewBox="0 0 30 18"><path d="M1 9C8 10 14 7 16 0L29 0C29 10 22 18 12 18 6 18 2 14 1 9Z" fill="url(#moon)"/></svg>
      <span class="temp">13&deg;</span>
    </div>
    <div class="tb-apps">
      <div class="tb-item"><svg><use href="#b-start"/></svg></div>
      <div class="tb-item"><svg><use href="#b-search"/></svg></div>
      <div class="tb-item"><svg><use href="#b-view"/></svg></div>
      <div class="tb-item run badge"><svg><use href="#b-wa"/></svg></div>
      <div class="tb-item run"><svg><use href="#b-meta"/></svg></div>
      <div class="tb-item"><svg viewBox="0 0 20 20"><use href="#b-zm"/><text x="10" y="13.5" text-anchor="middle" class="tx-zm">zm</text></svg></div>
      <div class="tb-item run"><svg viewBox="0 0 20 20"><use href="#b-word"/><text x="6" y="14" text-anchor="middle" class="tx-word">W</text></svg></div>
      <div class="tb-item"><svg viewBox="0 0 20 20"><use href="#b-prime"/><text x="10" y="7.5" text-anchor="middle" class="tx-prime">prime</text><text x="10" y="12.5" text-anchor="middle" class="tx-prime">video</text></svg></div>
      <div class="tb-item run"><svg><use href="#b-files"/></svg></div>
      <div class="tb-item run badge"><svg viewBox="0 0 20 20"><use href="#b-in"/><text x="10" y="15" text-anchor="middle" class="tx-in">in</text></svg></div>
      <div class="tb-item run"><svg><use href="#b-gpt"/></svg></div>
      <div class="tb-item run badge"><svg><use href="#b-tg"/></svg></div>
      <div class="tb-item run"><svg viewBox="0 0 20 20"><use href="#b-out"/><text x="5.5" y="14" text-anchor="middle" class="tx-o">O</text></svg></div>
      <div class="tb-item run"><svg><use href="#b-brave"/></svg></div>
      <div class="tb-item"><svg><use href="#b-chrome"/></svg></div>
      <div class="tb-item run"><svg><use href="#b-yt"/></svg></div>
      <div class="tb-item"><svg><use href="#b-store"/></svg></div>
      <div class="tb-item"><svg><use href="#b-spot"/></svg></div>
      <div class="tb-item run"><svg><use href="#b-dark"/></svg></div>
      <div class="tb-item open"><svg viewBox="0 0 20 20"><use href="#b-nx"/><text x="11.5" y="13" text-anchor="middle" class="tx-nx">NX</text></svg></div>
      <div class="tb-item run"><svg><use href="#b-play"/></svg></div>
      <div class="tb-item run"><svg><use href="#b-set"/></svg></div>
      <div class="tb-item run"><svg><use href="#b-photo"/></svg></div>
      <div class="tb-item run"><svg viewBox="0 0 20 20"><use href="#b-ac"/><text x="10" y="14.3" text-anchor="middle" class="tx-ac">Ac</text></svg></div>
      <div class="tb-item run"><svg><use href="#b-edge"/></svg></div>
    </div>
    <div class="tray">
      <svg class="tray-chev" viewBox="0 0 14 8"><path d="M1 7 7 1 13 7" fill="none" stroke="#fff" stroke-width="1.6"/></svg>
      <div class="lang">ENG<br>DE</div>
      <svg class="tray-ic wifi" viewBox="0 0 20 20"><path d="M1 7C6 2 14 2 19 7" fill="none" stroke="#777" stroke-width="1.2"/><path d="M3.5 10C7.5 6 12.5 6 16.5 10M6.5 13C8.5 11 11.5 11 13.5 13" fill="none" stroke="#fff" stroke-width="1.4"/><circle cx="10" cy="16" r="1.5" fill="#fff"/></svg>
      <svg class="tray-ic vol" viewBox="0 0 20 20"><path d="M2 7H5L10 3V17L5 13H2Z" fill="none" stroke="#fff" stroke-width="1.2"/><path d="M12.5 7.5A4 4 0 0 1 12.5 12.5M14.5 5.5A7 7 0 0 1 14.5 14.5" fill="none" stroke="#fff" stroke-width="1.2"/><path d="M16.5 3.5A10 10 0 0 1 16.5 16.5" fill="none" stroke="#777"/></svg>
      <svg class="tray-ic batt" viewBox="0 0 22 20"><path d="M3 5H17V15H3ZM18 8.5H20V11.5H18Z" fill="none" stroke="#fff" stroke-width="1.3"/><path d="M7 1 3 9H6L4 15 10 7H7L9 1Z" fill="#fff"/></svg>
      <div class="clock"><span>04:00</span><span>01-09-2025</span></div>
      <svg class="tray-ic bell" viewBox="0 0 20 20"><path d="M9 3C5 3 4 6 4 9V13L2 16H16L14 13V9C14 6 13 3 9 3ZM7 17H11V19H7Z" fill="#fff"/><path d="M12 2H17L12 7H17" fill="none" stroke="#172a33" stroke-width="3"/><path d="M12 2H17L12 7H17" fill="none" stroke="#fff" stroke-width="1.3"/></svg>
    </div>
  </footer>
</div>
</body>
</html>
```
FILE: styles.css
```css
* { box-sizing: border-box; }
html, body { margin: 0; padding: 0; height: 100%; overflow: hidden; }
body {
  font-family: "Noto Sans", "Open Sans", sans-serif;
  font-size: 13.5px;
  color: #333;
  background: #fff;
}
.defs { position: absolute; width: 0; height: 0; }
.app { display: flex; flex-direction: column; width: 1920px; height: 1080px; }

/* title bar */
.titlebar {
  height: 64px;
  flex: none;
  color: #fff;
  background: linear-gradient(90deg, #03658b, #05759f);
}
.top-row { display: flex; align-items: center; height: 30px; margin-bottom: 2px; }
.qat { display: flex; align-items: center; width: 989px; flex: none; color: #fff; }
.nx-logo { width: 46px; padding-left: 3px; font-family: "Open Sans", sans-serif; font-weight: 700; font-size: 25px; line-height: 30px; }
.qsep { width: 1px; height: 24px; margin: 0 3px; background: #04597a; }
.qi { width: 23.8px; height: 19px; flex: none; }
.qi.q-one { height: 16px; margin-top: -2px; }
.dim { opacity: .3; }
.qarrow { width: 16px; height: 12px; }
.qarrow::after {
  content: ""; display: block; margin: 4px auto 0;
  border: 4px solid transparent; border-top: 5px solid #fff; border-bottom: 0; width: 0;
}
.q-window { margin-left: -1px; font-size: 13.6px; letter-spacing: -.1px; }
.qcustom { width: 10px; height: 8px; margin-left: 5px; border-top: 1px solid #fff; }
.qcustom::after {
  content: ""; display: block; margin: 2px auto 0;
  border: 4px solid transparent; border-top: 5px solid #fff; border-bottom: 0; width: 0;
}
.app-title { font-size: 14.1px; white-space: nowrap; }
.siemens { margin-left: auto; font-family: "Open Sans", sans-serif; font-weight: 800; font-size: 15px; letter-spacing: .2px; }
.winbtns { display: flex; align-items: center; gap: 18px; width: 111px; padding-left: 30px; }
.w-min { width: 9px; height: 2px; margin-top: 10px; background: #fff; }
.w-ic { width: 13px; height: 13px; }

.menu-row { display: flex; align-items: stretch; height: 32px; }
.menu { display: flex; gap: 32px; padding-left: 21px; font-size: 14.8px; }
.menu a { display: flex; align-items: center; height: 30px; position: relative; }
.menu a.active { color: #f8c868; margin-left: 11px; }
.menu a.active::after {
  content: ""; position: absolute; left: -17px; right: -16px; bottom: 0; height: 2px; background: #f6c24c;
}
.menu-right { margin-left: auto; display: flex; align-items: center; gap: 13px; padding: 0 8px 2px 0; }
.search {
  display: flex; align-items: center; justify-content: space-between;
  width: 204px; height: 25px; padding: 0 3px;
  background: #fff; border: 1px solid #9a9a9a; color: #a8a8a8; font-size: 13.3px;
}
.search-ic { width: 18px; height: 18px; }
.mr-ic { width: 15px; height: 15px; }
.tx-help { font: 400 11px "Noto Sans", sans-serif; fill: #fff; }

/* ribbon */
.ribbon { display: flex; height: 104px; flex: none; padding-top: 5px; border-bottom: 2px solid #dedede; background: #fff; }
.group { display: flex; flex-direction: column; height: 94px; border-right: 1px solid #dcdcdc; }
.g-cons { width: 120px; padding-left: 8px; }
.g-cons .group-tools { gap: 2px; }
.g-base { width: 596px; padding-left: 7px; }
.g-sync { width: 278px; padding-left: 7.25px; }
.group-tools { flex: 1; display: flex; align-items: flex-start; }
.tool {
  display: flex; flex-direction: column; align-items: center;
  min-width: 41px; padding: 0 4px; text-align: center; font-size: 13.3px; line-height: 19px; letter-spacing: -.15px;
}
.tool.nudge { margin-left: 2px; }
.tool.tight { margin-left: -2.5px; }
.big-ic { width: 36px; height: 33px; margin-bottom: 4px; }
.small-tools { display: flex; flex-direction: column; gap: 9px; margin-left: 5px; padding-top: 4px; }
.small-tools.sync-small { margin-left: 8px; }
.stool { display: flex; align-items: center; gap: 3px; height: 28px; font-size: 13.3px; letter-spacing: -.15px; white-space: nowrap; }
.small-ic { width: 26px; height: 26px; }
.group-label { display: flex; align-items: center; height: 16px; margin-bottom: -2px; font-size: 13.3px; color: #14759c; letter-spacing: -.1px; padding-right: 10px; }
.group-label span { flex: 1; padding-right: 8px; text-align: center; }
.caret {
  display: inline-block; width: 0; vertical-align: middle;
  border: 4px solid transparent; border-top: 5px solid #222; border-bottom: 0;
}
.group-label .caret { margin-left: 4px; }
.ribbon-end { flex: 1; display: flex; justify-content: flex-end; align-items: flex-end; padding: 0 6px 5px 0; }

/* main area */
.workspace { flex: 1; display: flex; min-height: 0; border-bottom: 2px solid #b4b4b4; }
.rail { width: 37px; flex: none; background: #dcdcdc; border-right: 1px solid #bdbdbd; display: flex; flex-direction: column; }
.rail-btn { height: 36px; margin-bottom: 12px; padding-left: 2px; display: flex; align-items: center; justify-content: center; }
.rail-btn:first-child { height: 34px; margin-bottom: 3px; }
.rail-btn.on {
  height: 47px; margin: 0 -1px 0 3px; padding-left: 0; background: #fff;
  border: 1px solid #bdbdbd; border-right: 0;
}
.rail-btn.on + .rail-btn { margin-top: 5px; }
.rail-ic { width: 24px; height: 24px; }
.rail-ic.gear { width: 18px; height: 18px; }

.navigator { width: 308px; flex: none; display: flex; flex-direction: column; padding: 0 11px 0 8px; border-right: 2px solid #b4b4b4; }
.nav-head { display: flex; align-items: center; height: 30px; padding-bottom: 2px; font-size: 14.2px; letter-spacing: -.1px; color: #222; }
.nav-head-ic { width: 14px; height: 18px; margin-right: 5px; }
.nav-max { width: 12px; height: 11px; margin-left: auto; border: 1px solid #111; border-top-width: 2px; }
.tree { flex: 1; display: flex; flex-direction: column; min-height: 0; border-bottom: 1px solid #d8d8d8; }
.tree-head {
  display: flex; align-items: center; height: 24px; flex: none; padding: 2px 0 0 7px;
  background: #efefef; border-bottom: 1px solid #d4d4d4; font-size: 14.2px; letter-spacing: -.1px; color: #333;
}
.sort-up { width: 0; margin-left: 18px; border: 6px solid transparent; border-bottom: 6px solid #222; border-top: 0; }
.tree-rows { flex: 1; overflow: hidden; position: relative; min-height: 0; }
.tree-lines { position: absolute; left: 8px; top: 0; width: 288px; height: 150px; pointer-events: none; }
.row {
  display: flex; align-items: center; height: 24px; padding-top: 3px; font-size: 14.2px; letter-spacing: -.08px; color: #333;
  border-bottom: 1px solid #ececec; background: #fff;
}
.row.alt { background: #f9f9f9; }
.row.l1 { padding-left: 5px; }
.row.l2 { padding-left: 23px; }
.row.l3 { padding-left: 40px; }
.row strong { font-weight: 700; color: #222; letter-spacing: -.05px; white-space: nowrap; }
.expander {
  display: flex; align-items: center; justify-content: center;
  width: 11px; height: 11px; flex: none; margin-right: 4px;
  border: 1px solid #ccc; background: #fff; font-style: normal; font-size: 11px; line-height: 1; color: #222;
}
.row.l2 .expander { margin-right: 3px; }
.chk { display: block; width: 14px; height: 14px; flex: none; margin-right: 2px; border: 1px solid #333; background: #fff; }
.chk svg { width: 12px; height: 12px; display: block; }
.row-folder { width: 18px; height: 14px; margin: 0 3px 0 14px; flex: none; }
.row-ic { width: 17px; height: 17px; margin-right: 3px; flex: none; }
.row-cube { width: 14px; height: 14px; margin-right: 4px; flex: none; }
.tree-scroll { height: 21px; flex: none; display: flex; align-items: center; padding-left: 22px; background: #efefef; }
.tree-scroll i { display: block; width: 120px; height: 3px; background: #888; border-radius: 2px; }
.splitter { height: 9px; flex: none; margin-top: 2px; background: #dcdcdc; border: 1px solid #a8a8a8; }
.panel {
  display: flex; align-items: center; gap: 11px; height: 29px; flex: none; padding: 4px 0 0 11px;
  color: #0e6f96; font-size: 16.5px; letter-spacing: -.1px; border-bottom: 2px solid #d4d4d4;
}
.panel + .panel { margin-bottom: 6px; }
.panel-arrow { width: 0; border: 6px solid transparent; border-left: 7px solid #0b5f82; border-right: 0; margin-bottom: 4px; }

.graphics { flex: 1; display: flex; flex-direction: column; min-width: 0; }
.tabs {
  display: flex; align-items: stretch; height: 30px; flex: none;
  border-bottom: 3px solid #046d94; font-size: 13.9px; color: #222; white-space: nowrap;
}
.tab { display: flex; align-items: center; padding: 2px 15px 0 6px; margin-right: 7px; }
.tab-ic { width: 16px; height: 16px; margin-right: 4px; flex: none; }
.tab.active { margin: 0 0 0 -1px; padding: 2px 5px 0 6px; background: #05617f; color: #fff; }
.tab-doc { width: 12px; height: 12px; margin-left: 5px; }
.tab-close { width: 9px; height: 9px; margin-left: 6px; }
.tab-more { margin-left: auto; padding: 4px 5px 0 0; font-size: 13.5px; }

.canvas { flex: 1; position: relative; min-height: 0; }
.model { display: block; width: 1575px; height: 798px; position: absolute; left: 0; top: 0; }
.wire path { fill: none; stroke: #5c5c5c; stroke-width: 3.2; stroke-linejoin: round; }
.wire path.thin { stroke: #8c9296; }
.con-line { fill: none; stroke: #4a6cb0; stroke-width: 3; }
.con-mark { fill: #4566ad; }
.triad-box { fill: none; stroke: #9a9a9a; stroke-width: 1; }
.tx-z { font: 400 11px "Liberation Sans", sans-serif; fill: #1a3fa8; }
.tx-x { font: 400 13px "Liberation Sans", sans-serif; fill: #e23c3c; }
.student-note {
  position: absolute; right: 7px; bottom: 1px;
  font-family: "Liberation Sans", sans-serif; font-size: 16.65px; color: #f04444; white-space: nowrap;
}

/* status + taskbar */
.statusbar {
  height: 22px; flex: none; padding: 1px 3px 0; line-height: 21px; background: #fff;
  font-weight: 700; font-size: 13.6px; color: #1a1a1a; white-space: nowrap;
}
.taskbar { height: 60px; flex: none; display: flex; align-items: center; background: #172a33; border-top: 1px solid #2d3d45; color: #fff; }
.weather { width: 461px; flex: none; height: 100%; position: relative; }
.moon { position: absolute; left: 27px; top: 27px; width: 29px; height: 17px; }
.temp {
  position: absolute; left: 36px; top: 8px; width: 29px; height: 24px; line-height: 23px; text-align: center;
  border-radius: 12px; background: #2b2f31; font-size: 13.5px; letter-spacing: -.2px;
}
.tb-apps { display: flex; flex: none; }
.tb-item { width: 40px; height: 59px; padding-bottom: 2px; display: flex; align-items: center; justify-content: center; position: relative; }
.tb-item svg { width: 20px; height: 20px; }
.tb-item.run::after, .tb-item.open::after {
  content: ""; position: absolute; left: 18px; bottom: 5px; width: 4px; height: 4px; border-radius: 50%; background: #8a9aa1;
}
.tb-item.badge::before {
  content: ""; position: absolute; left: 28px; top: 15px; width: 5px; height: 5px; border-radius: 50%; background: #8fb8c4;
}
.tb-item.open { background: #1f343d; border-radius: 5px; margin: 4px 2px; height: 51px; width: 36px; padding-bottom: 0; }
.tb-item.open::after { left: 11px; bottom: 1px; width: 13px; height: 3px; border-radius: 2px; background: #a0cfdd; }
.tray { flex: 1; display: flex; align-items: center; height: 100%; padding: 0 0 2px 135px; font-size: 14.5px; }
.tray-chev { width: 14px; height: 8px; margin-right: 23px; margin-top: -2px; }
.lang { width: 36px; text-align: center; line-height: 20px; letter-spacing: -.1px; }
.tray-ic { width: 19px; height: 19px; flex: none; }
.tray-ic.wifi { margin-left: 19px; }
.tray-ic.vol { margin-left: 9px; }
.tray-ic.batt { margin-left: 13px; width: 21px; }
.clock { display: flex; flex-direction: column; align-items: flex-end; width: 96.5px; line-height: 20px; font-size: 15px; letter-spacing: -.1px; }
.tray-ic.bell { margin-left: 12px; }
.tx-zm { font: 700 9px "Noto Sans", sans-serif; fill: #fff; }
.tx-word { font: 700 10px "Noto Sans", sans-serif; fill: #fff; }
.tx-prime { font: 700 5.5px "Noto Sans", sans-serif; fill: #0c2a44; }
.tx-in { font: 700 14px "Noto Sans", sans-serif; fill: #fff; }
.tx-o { font: 700 10px "Noto Sans", sans-serif; fill: #fff; }
.tx-nx { font: 800 10px "Noto Sans", sans-serif; fill: #fff; }
.tx-ac { font: 400 12px "Noto Sans", sans-serif; fill: #aaa; }
```
